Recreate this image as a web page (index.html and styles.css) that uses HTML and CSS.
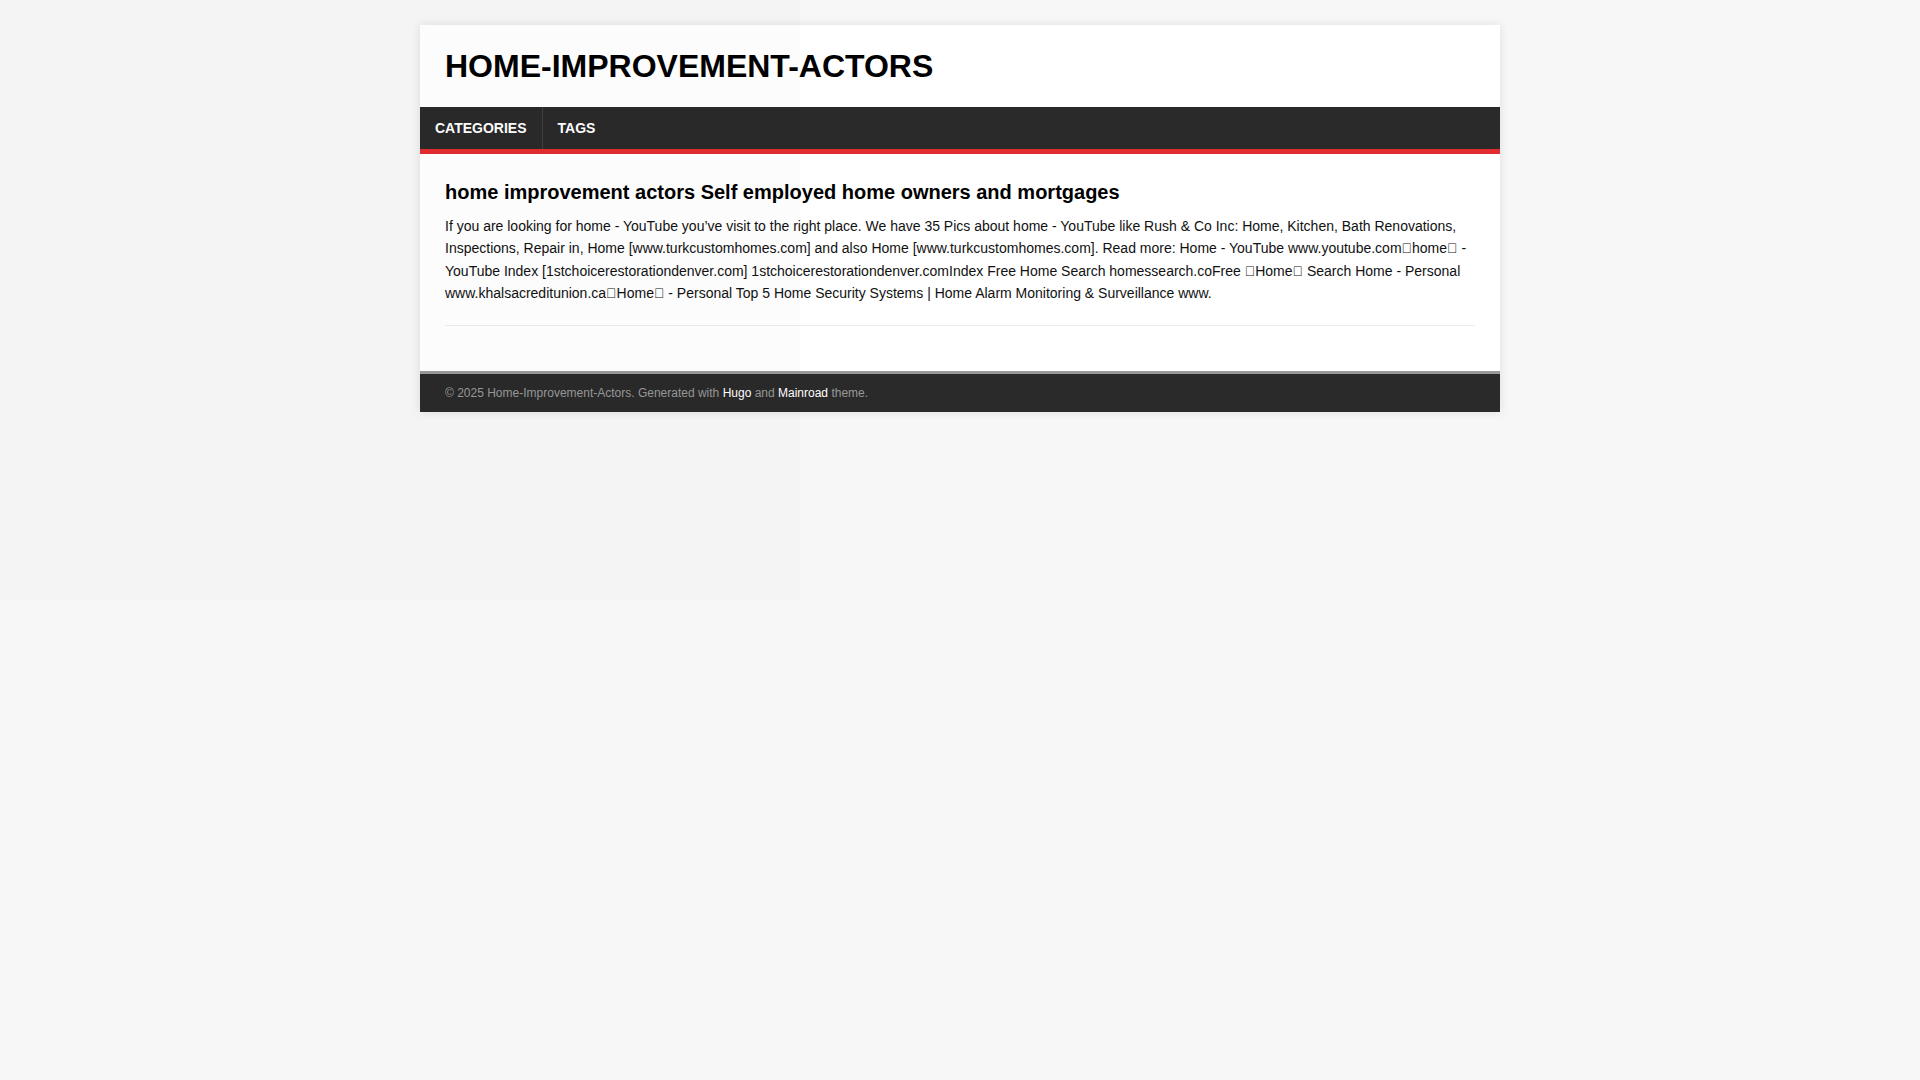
FILE: index.html
```html
<!DOCTYPE html>
<html lang="en">
<head>
<meta charset="utf-8">
<title>Home-Improvement-Actors</title>
<link rel="stylesheet" href="styles.css">
</head>
<body>
<div class="container">
  <header class="header">
    <a class="logo" href="#">HOME-IMPROVEMENT-ACTORS</a>
  </header>
  <nav class="menu">
    <ul class="menu__list">
      <li class="menu__item"><a class="menu__link" href="#">CATEGORIES</a></li>
      <li class="menu__item"><a class="menu__link" href="#">TAGS</a></li>
    </ul>
  </nav>
  <main class="main">
    <article class="list__item">
      <h2 class="list__title"><a href="#">home improvement actors Self employed home owners and mortgages</a></h2>
      <p class="list__summary">If you are looking for home - YouTube you’ve visit to the right place. We have 35 Pics about home - YouTube like Rush &amp; Co Inc: Home, Kitchen, Bath Renovations, Inspections, Repair in, Home [www.turkcustomhomes.com] and also Home [www.turkcustomhomes.com]. Read more: Home - YouTube www.youtube.com&#xE000;home&#xE000; - YouTube Index [1stchoicerestorationdenver.com] 1stchoicerestorationdenver.comIndex Free Home Search homessearch.coFree &#xE000;Home&#xE000; Search Home - Personal www.khalsacreditunion.ca&#xE000;Home&#xE000; - Personal Top 5 Home Security Systems | Home Alarm Monitoring &amp; Surveillance www.</p>
    </article>
  </main>
  <footer class="footer">
    <span class="footer__copyright">© 2025 Home-Improvement-Actors. Generated with <a href="#">Hugo</a> and <a href="#">Mainroad</a> theme.</span>
  </footer>
</div>
<div class="shade"></div>
</body>
</html>
```

FILE: styles.css
```css
html, body {
  margin: 0;
  padding: 0;
}
body {
  background: #f7f7f7;
  font-family: "Liberation Sans", Arial, sans-serif;
  color: #000;
  font-size: 14px;
  line-height: 1.6;
}
a {
  text-decoration: none;
  color: inherit;
}
.container {
  max-width: 1080px;
  margin: 25px auto;
  background: #fff;
  box-shadow: 0 0 10px rgba(0, 0, 0, 0.1);
}
.header {
  padding: 25px;
}
.logo {
  display: block;
  font-size: 32px;
  font-weight: 700;
  line-height: 1;
  color: #000;
}
.menu {
  background: #2a2a2a;
  border-bottom: 5px solid #e22d30;
}
.menu__list {
  display: flex;
  margin: 0;
  padding: 0;
  list-style: none;
}
.menu__item {
  border-right: 1px solid rgba(255, 255, 255, 0.1);
}
.menu__item:last-child {
  border-right: 0;
}
.menu__link {
  display: block;
  padding: 14px 15px;
  font-size: 14px;
  line-height: 14px;
  font-weight: 700;
  color: #fff;
}
.main {
  padding: 25px;
}
.list__item {
  padding-bottom: 20px;
  margin-bottom: 20px;
  border-bottom: 1px solid #ebebeb;
}
.list__title {
  margin: 0 0 10px;
  font-size: 20px;
  line-height: 1.3;
  font-weight: 700;
}
.list__summary {
  margin: 0;
  font-size: 14px;
  line-height: 1.6;
  color: #111;
}
.footer {
  padding: 10px 25px;
  font-size: 12px;
  line-height: 18px;
  color: #999;
  background: #2a2a2a;
  border-top: 3px solid #999;
}
.footer a {
  color: #fff;
}
.shade {
  position: fixed;
  left: 0;
  top: 0;
  width: 800px;
  height: 600px;
  background: rgba(0, 0, 0, 0.012);
  pointer-events: none;
}
```
